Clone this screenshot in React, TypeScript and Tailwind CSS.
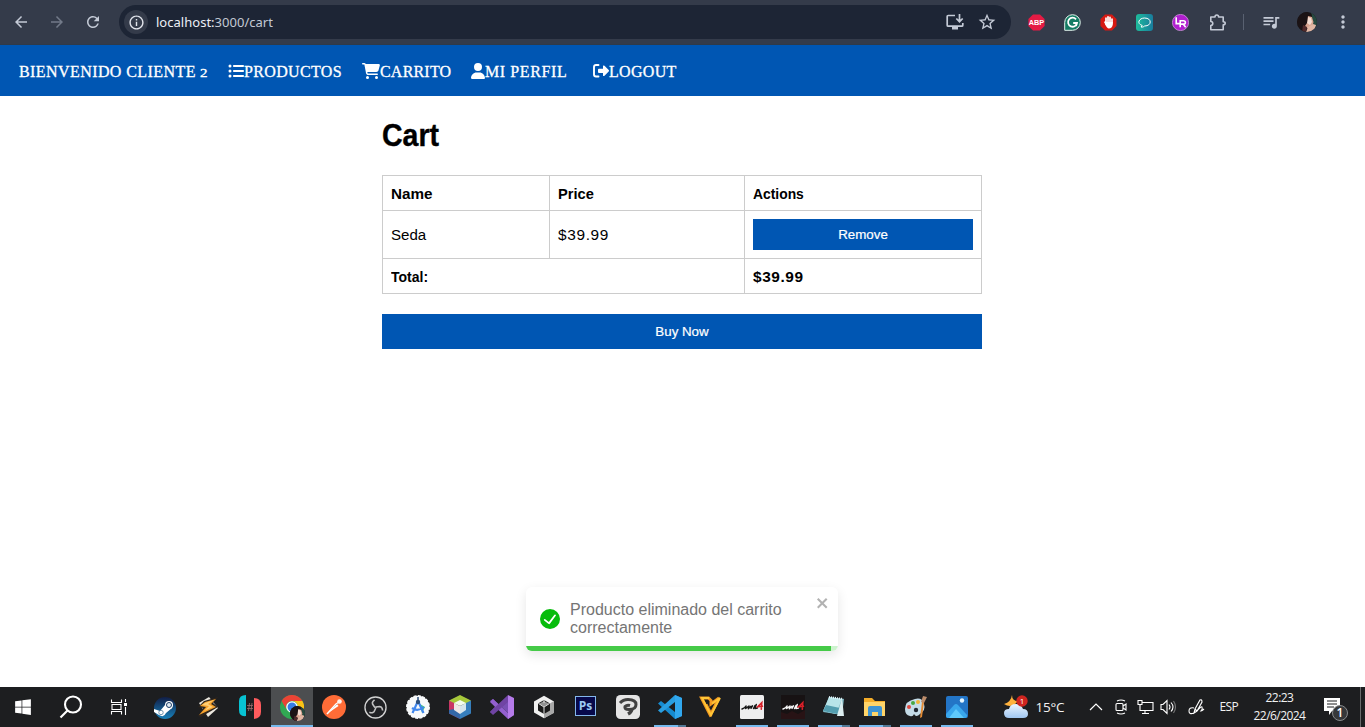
import type { ReactNode } from "react";
import {
  MdArrowBack,
  MdArrowForward,
  MdRefresh,
  MdInfoOutline,
  MdStarBorder,
  MdQueueMusic,
  MdMoreVert,
} from "react-icons/md";
import { FaListUl, FaCartShopping, FaUser, FaWindows } from "react-icons/fa6";

function Portrait({ className }: { className: string }) {
  return (
    <svg viewBox="0 0 20 20" className={className}>
      <clipPath id="face"><circle cx="10" cy="10" r="10" /></clipPath>
      <g clipPath="url(#face)">
        <rect width="20" height="20" fill="#17191c" />
        <path d="M14 0h6v14l-4 1z" fill="#26493f" />
        <path d="M9 3c4-1 6 1 6.500 4l1 3-1 4-4 3-4-3z" fill="#d9a590" />
        <path d="M11 5l3 1 1 4-2 3-3-2z" fill="#f4ddd2" />
        <path d="M0 0h10c4 1 5 2 5 5l-4-1-1 7-2 3-1 6H0z" fill="#1b1315" />
        <path d="M9 20l2-5 5-3 3 1-1 4-4 3z" fill="#e2b7a4" />
        <path d="M5 20l1-7 4 2-1 5z" fill="#50292a" />
      </g>
    </svg>
  );
}

function BrowserBar() {
  return (
    <header className="flex h-[45px] shrink-0 items-center border-b border-[#2f3a49] bg-[#343b4a] text-[#c4cad6]">
      <div className="flex items-center gap-[18px] pl-[12px]">
        <MdArrowBack className="size-[18px]" />
        <MdArrowForward className="size-[18px] text-[#727a89]" />
        <MdRefresh className="size-[18px]" />
      </div>
      <div className="ml-[17px] flex h-[34px] w-[892px] items-center rounded-full bg-[#1d2535] pl-[5px]">
        <div className="flex size-6 items-center justify-center rounded-full bg-[#343b4a]">
          <MdInfoOutline className="size-[17px] text-[#e2e5ec]" />
        </div>
        <span className="ml-2 pt-px font-['Noto_Sans',sans-serif] text-[13px] tracking-[0.02px] text-[#c3c9d4]">
          <span className="text-[#eceff5]">localhost:</span>3000/cart
        </span>
        <div className="ml-auto flex items-center gap-3 pr-[14px]">
          <svg viewBox="0 0 20 18" className="h-[18px] w-5" fill="none" stroke="currentColor" strokeWidth="1.7">
            <path d="M10 2.500H3.200q-1 0-1 1v8.700q0 1 1 1h13.600q1 0 1-1V10M14.500 1v7.300M11.300 5.500l3.200 3.200 3.200-3.200" />
            <path d="M7 14h6v2.500H7z" fill="currentColor" stroke="none" />
          </svg>
          <MdStarBorder className="size-5" />
        </div>
      </div>
      <div className="ml-[17px] flex items-center gap-[19px]">
        <svg viewBox="0 0 17 17" className="size-[17px]">
          <path d="M5 .4h7L16.600 5v7L12 16.600H5L.4 12V5z" fill="#e51b44" />
          <text x="8.500" y="11.300" textAnchor="middle" fontSize="7.300" fontWeight="700" fill="white" fontFamily="Liberation Sans, sans-serif">ABP</text>
        </svg>
        <svg viewBox="0 0 17 17" className="size-[17px]" fill="none">
          <path d="M.7 16.300V8.500a7.800 7.800 0 1 1 7.800 7.800z" fill="#147c64" stroke="#e2f1eb" />
          <path d="M12 5.300A4.500 4.500 0 1 0 13 9H9.200M13 9l-1 3" stroke="white" strokeWidth="1.8" />
        </svg>
        <svg viewBox="0 0 17 17" className="size-[17px]">
          <path d="M5 .5h7L16.500 5v7L12 16.500H5L.5 12V5z" fill="#d71912" />
          <g fill="none" stroke="white" strokeLinecap="round" strokeWidth="1.7"><path d="M6 9V4.200M8 8V2.800M10 8V3.400M12 9V5M5 8.200l2 3" /></g>
          <path d="M5.200 8h7.600v2.600q-.6 4-4 4-1.700 0-3.600-4z" fill="white" />
        </svg>
        <svg viewBox="0 0 17 17" className="size-[17px]">
          <defs><linearGradient id="chat"><stop stopColor="#1ebc9c" /><stop offset="1" stopColor="#197c9d" /></linearGradient></defs>
          <rect width="17" height="17" rx="3" fill="url(#chat)" />
          <path d="M5 13l1.200-1.500C.2 9.500 3 4 8.600 4c7.500 0 7.500 8 0 8-1 1-2 1.200-3.600 1z" fill="none" stroke="white" />
        </svg>
        <svg viewBox="0 0 17 17" className="size-[17px]">
          <circle cx="8.500" cy="8.500" r="8.100" fill="#b01fd0" stroke="#dba3e8" strokeWidth=".7" />
          <path d="M4.200 3.300v6.300h4.200M8.200 13.200V6.700h3.200q2 0 2 1.700t-2 1.700H8.600M11.300 10.200l2.400 3" fill="none" stroke="white" strokeWidth="1.6" />
        </svg>
        <svg viewBox="0 0 19 19" className="size-[19px]" fill="none" stroke="currentColor" strokeWidth="1.6">
          <path d="M2.800 4H7q0-2 1.800-2t1.800 2h4.600v4.700q2 0 2 1.600t-2 1.600v4.800H2.800v-4.200q2-.2 2-2t-2-2z" strokeLinejoin="round" />
        </svg>
      </div>
      <div className="ml-[16px] h-4 w-px bg-[#596171]" />
      <MdQueueMusic className="ml-[17px] size-5" />
      <Portrait className="ml-4 size-5" />
      <MdMoreVert className="ml-4 size-5" />
    </header>
  );
}

function SiteNav() {
  return (
    <nav className="flex h-[51px] shrink-0 items-center bg-[#0056b3] pl-[19px] pt-px font-['Liberation_Serif',serif] text-[16px] text-white [-webkit-text-stroke:0.3px_white]">
      <span className="w-[209px] pt-px tracking-[0.42px]">BIENVENIDO CLIENTE <span className="inline-block origin-bottom-left scale-x-[1.25] text-[12px]">2</span></span>
      <a className="flex w-[134px] items-center tracking-[0.35px]"><FaListUl className="size-4" /><span className="pt-px">PRODUCTOS</span></a>
      <a className="flex w-[109px] items-center tracking-[0.2px]"><FaCartShopping className="mb-px h-4 w-[18px]" /><span className="pt-px">CARRITO</span></a>
      <a className="flex w-[122px] items-center tracking-[0.6px]"><FaUser className="mb-px h-4 w-[14px]" /><span className="pt-px">MI PERFIL</span></a>
      <a className="flex items-center tracking-[0.3px]">
        <svg viewBox="0 0 16 16" className="mb-px size-4">
          <path d="M5.500 2H3Q1 2 1 4v7.500q0 2 2 2h2.500" fill="none" stroke="white" strokeWidth="1.900" strokeLinecap="round" />
          <path d="M10 2.700q.8-.6 1.500 0l4.200 4.400q.6.700 0 1.400l-4.200 4.300q-.7.600-1.500 0V10H6q-1 0-1-1V6.700q0-1 1-1h4z" fill="white" />
        </svg>
        <span className="pt-px">LOGOUT</span>
      </a>
    </nav>
  );
}

function Cart() {
  return (
    <main className="mx-auto w-[600px] text-base text-black">
      <h1 className="origin-left scale-x-[0.89] pt-5 text-[32px] leading-[38px] font-bold [-webkit-text-stroke:0.4px_black]">Cart</h1>
      <table className="mt-[21px] w-[599px] table-fixed border-collapse text-left [&_td]:border [&_td]:border-[#cccccc] [&_td]:px-2 [&_td]:py-0 [&_th]:border [&_th]:border-[#cccccc] [&_th]:px-2 [&_th]:pt-[2px] [&_th]:pb-0">
        <colgroup><col className="w-[167px]" /><col className="w-[195px]" /><col className="w-[237px]" /></colgroup>
        <tbody>
          <tr className="h-[35px]">
            <th><span className="inline-block origin-left scale-x-[0.99] text-[15.4px]">Name</span></th>
            <th><span className="inline-block origin-left scale-x-[0.95] text-[15.4px]">Price</span></th>
            <th><span className="inline-block origin-left scale-x-[0.9] text-[15.4px]">Actions</span></th>
          </tr>
          <tr className="h-12">
            <td><span className="inline-block origin-left scale-x-[0.98] text-[15.4px]">Seda</span></td>
            <td className="text-[15.4px] tracking-[0.65px]">$39.99</td>
            <td><button className="block h-[31px] w-full bg-[#0056b3] text-[13.33px] text-white [-webkit-text-stroke:0.2px_white]">Remove</button></td>
          </tr>
          <tr className="h-[35px] font-bold">
            <td colSpan={2}><span className="mt-[2px] inline-block origin-left scale-x-[0.91] text-[15.4px]">Total:</span></td>
            <td className="tracking-[0.6px]"><span className="mt-[2px] inline-block text-[15.4px]">$39.99</span></td>
          </tr>
        </tbody>
      </table>
      <button className="mt-5 h-[35px] w-full bg-[#0056b3] text-[13.33px] text-white [-webkit-text-stroke:0.2px_white]">Buy Now</button>
    </main>
  );
}

function Toast() {
  return (
    <div className="absolute top-[587px] left-[526px] flex h-16 w-[312px] flex-col overflow-hidden rounded-[6px] bg-white shadow-[0_4px_12px_rgba(0,0,0,0.1)]">
      <div className="flex flex-1 items-center pt-[5px] pl-[14px] text-[#757575]">
        <svg viewBox="0 0 24 24" className="size-5" fill="#07bc0c"><path d="M12 0a12 12 0 1 0 12 12A12 12 0 0 0 12 0zm6.900 8.200-6.800 9.200a1.500 1.500 0 0 1-2.200.3l-4.900-3.900a1 1 0 0 1 1.300-1.600l4.300 3.500L17.300 7a1 1 0 1 1 1.600 1.200z" /></svg>
        <p className="ml-[10px] w-[230px] text-base leading-[18px]">Producto eliminado del carrito correctamente</p>
        <svg viewBox="0 0 14 16" className="mb-[32px] ml-4 h-4 w-[14px]" fill="#b2b2b2"><path fillRule="evenodd" d="M7.710 8.230l3.750 3.750-1.480 1.480-3.750-3.750-3.750 3.750L1 11.980l3.750-3.750L1 4.480 2.480 3l3.750 3.750L9.980 3l1.480 1.480z" /></svg>
      </div>
      <div className="h-[5px] bg-[#cdf3ce]"><div className="h-full w-[305px] bg-[#45ca48]" /></div>
    </div>
  );
}

type App = { icon: ReactNode; wide: boolean; state?: "active" | "open" | "multi" };

function Mir({ dark }: { dark?: boolean }) {
  return (
    <svg viewBox="0 0 24 24" className="size-6">
      <rect width="24" height="24" rx={dark ? 0 : 1.5} fill={dark ? "#171213" : "#eeeeef"} />
      {dark && <path d="M0 24v-7l6 2 5-3 6 3 7-4v9z" fill="#281315" />}
      <g fill="none" strokeLinecap="round">
        <path d="M2 14q3-1 4-3l-.3 2.500L9 11l-.7 2.700L11 11.300M11 13.300l1.500-2.500M13.500 13.500l1.500-3M16.300 9.500L15 13.500l2.500-.5" stroke={dark ? "#f4f4f4" : "#171717"} strokeWidth="1.400" strokeLinejoin="round" />
        <path d="M21.300 14.300l.5-6.600-4 4 4.700-.4" stroke="#d82029" strokeWidth="1.600" />
      </g>
    </svg>
  );
}

const apps: App[] = [
  { wide: true, icon: <svg viewBox="0 0 22 22" className="mr-px mt-px size-[22px]"><defs><linearGradient id="steam" x2="0" y2="1"><stop stopColor="#111e47" /><stop offset="1" stopColor="#1880b9" /></linearGradient></defs><circle cx="11" cy="11" r="11" fill="url(#steam)" /><path d="M0 12l6 2 5-6 7 3-6 5q-2 5-7 2L0 15z" fill="white" /><circle cx="15" cy="8" r="4" fill="white" /><circle cx="15" cy="8" r="2.500" fill="#e4edf4" stroke="#1d3f69" /><circle cx="7" cy="15.500" r="2.200" fill="none" stroke="#57809e" strokeWidth=".8" /></svg> },
  { wide: true, icon: <svg viewBox="0 0 24 24" className="size-6"><path d="M3 8L13 2l9 11-10 9z" fill="#ece8df" /><path d="M22 2L8 6 2 12l5 1-5 8 3 1 17-10-5-4z" fill="#2d241c" /><path d="M20 4L9 7l-5 4 6 1-7 8L20 12l-5-3z" fill="#f5a12c" /><path d="M18 5L9 8l-3 2 7 1-5 5 9-4-5-3z" fill="#ffcf76" /></svg> },
  { wide: true, icon: <svg viewBox="0 0 24 24" className="size-6"><path d="M8 0v21Q1 22 1 15V6q0-6 7-6z" fill="#08c3d3" /><path d="M16 3q7 0 7 7v7q0 6-7 7z" fill="#ff5b5d" /><g stroke="#9b6e70" strokeWidth=".8"><path d="M9 10.500h6M9 13.500h6M11.500 8l-1 8M14 8l-1 8" /></g></svg> },
  { wide: true, state: "active", icon: <div className="flex size-6 items-center"><svg viewBox="0 0 24 24" className="size-6 shrink-0"><circle cx="12" cy="12" r="12" fill="#31a853" /><path d="M1.600 6A12 12 0 0 1 22.400 6H12a6 6 0 0 0-5.200 9z" fill="#ea4335" /><path d="M22.400 6A12 12 0 0 1 12 24l5.200-9A6 6 0 0 0 12 6z" fill="#fbc116" /><circle cx="12" cy="12" r="5.800" fill="white" /><circle cx="12" cy="12" r="4.500" fill="#367ce5" /></svg><Portrait className="-ml-[14px] mt-[13px] size-[15px] shrink-0" /></div> },
  { wide: true, icon: <svg viewBox="0 0 24 24" className="size-6"><circle cx="12" cy="12" r="12" fill="#ff6c37" /><path d="M5 19l6-7 4-3 1.500 2L12 14z" fill="white" /><path d="M5 19l9-10 3-2" stroke="white" strokeWidth="1.5" /><circle cx="17.500" cy="6.500" r="2.300" fill="#fff4ef" /></svg> },
  { wide: true, icon: <svg viewBox="0 0 24 24" className="size-[23px]" fill="none"><circle cx="12" cy="12" r="11" fill="#202124" stroke="#d2d2d2" strokeWidth="1.400" /><g stroke="#c1c1c1" strokeWidth="1.700"><path d="M11 4q-4 3-1 6 1 2 2 2" /><path d="M11 4q-4 3-1 6 1 2 2 2" transform="rotate(120 12 12)" /><path d="M11 4q-4 3-1 6 1 2 2 2" transform="rotate(240 12 12)" /></g></svg> },
  { wide: true, icon: <svg viewBox="0 0 24 24" className="size-6"><circle cx="12" cy="12" r="11.300" fill="#f8fafb" /><circle cx="12" cy="12" r="11.300" fill="none" stroke="#f8fafb" strokeWidth="1.300" strokeDasharray="3 1.400" /><path d="M14 9l5 3-3 6z" fill="#43c980" /><path d="M12 6L6.500 18M12 6l5.500 12M6 13q5.500 4 12-1" fill="none" stroke="#4087ed" strokeWidth="2.200" /><circle cx="12" cy="7" r="2.200" fill="#2b4e7b" /><path d="M12 2v4" stroke="#2b4e7b" strokeWidth="1.500" /></svg> },
  { wide: true, icon: <svg viewBox="0 0 24 24" className="size-6"><path d="M12 0l11 5.500-4 5.500-7-3-7 3-4-5.500z" fill="#a6c83b" /><path d="M1 5.500v13L12 24v-6L6 14V8z" fill="#c93565" /><path d="M1 15v3.500L12 24v-6l-6-4z" fill="#3467a8" /><path d="M23 5.500v13L12 24v-6l6-4V8z" fill="#367ebc" /><path d="M12 5l6 3-6 3-6-3z" fill="#f3fbed" /><path d="M6 8l6 3v8l-6-4z" fill="#eee6e5" /><path d="M18 8l-6 3v8l6-4z" fill="#d6e5ec" /></svg> },
  { wide: true, icon: <svg viewBox="0 0 24 24" className="size-6"><path d="M0 6l3-2 15 14V6L3 19l-3-2 5-5.300z" fill="#7950b4" /><path d="M3 4l15 14 6 2-6 4L0 7z" fill="#9360cf" /><path d="M18 0l6 3v17l-6 4z" fill="#b57bea" /><path d="M18 0v7L3 20l-3-3z" fill="#7044a4" /></svg> },
  { wide: true, icon: <svg viewBox="0 0 24 24" className="size-6"><path d="M12 .8l10 5.600v11.200l-10 5.600-10-5.600V6.400z" fill="#f0f0f0" /><path d="M22 6v12l-10 5.200V12z" fill="#a8a8a8" /><path d="M12 5l6 3.400v7.200L12 19l-6-3.400V8.400z" fill="#1b1b1b" /><path d="M12 6l5 2.700-5 2.800-5-2.800z" fill="#929292" /><path d="M12 12v7M6.500 8.500L12 12l5.500-3.500M12 5v3" fill="none" stroke="#e3e3e3" /></svg> },
  { wide: true, icon: <div className="mb-[2px] flex h-5 w-[21px] items-center justify-center border border-[#83b7eb] bg-[#07094b] font-['Open_Sans',sans-serif] text-[12px] leading-none font-bold text-[#9bc9f5]">Ps</div> },
  { wide: true, icon: <svg viewBox="0 0 24 24" className="size-6"><rect width="24" height="24" rx="4.500" fill="#e5e5e5" /><path d="M4 8q3-3.500 8-3.500 8 0 8 5 0 5-7 5-5 0-4-3 2-2 5-1" fill="none" stroke="#414141" strokeWidth="3" /><path d="M16 13q0 4-4 6" fill="none" stroke="#414141" strokeWidth="3.500" /></svg> },
  { wide: true, state: "multi", icon: <svg viewBox="0 0 24 24" className="size-6"><path d="M17 0l7 3v18l-7 3L0 8.500 3 6l14 11z" fill="#168bd0" /><path d="M17 0v7L3 18l-3-2.500z" fill="#299fe2" /><path d="M17 0l7 3v18l-7 3z" fill="#31a8ef" /></svg> },
  { wide: false, icon: <svg viewBox="0 0 24 24" className="size-6" fill="none" strokeLinejoin="miter"><path d="M7 9.500L12 19l8-16-8 6V5.500L9.500 3H2.500L12 21.500" stroke="#f39a21" strokeWidth="3" /><path d="M10 3H3l9 17 9-17-8 5.500" stroke="#ffc637" strokeWidth="1.800" /></svg> },
  { wide: false, state: "open", icon: <Mir /> },
  { wide: false, state: "open", icon: <Mir dark /> },
  { wide: false, state: "multi", icon: <svg viewBox="0 0 24 24" className="size-6"><path d="M7 2l15 2-2 16-19-3z" fill="#78b3bf" /><path d="M7 2l13 2-6 15-13-3z" fill="#b8e4e9" /><path d="M4 10l14 3-3 6-14-3z" fill="#539daf" /><path d="M20 3l2 18h-7z" fill="#dceef0" /><path d="M7 2l14 2" stroke="#e9faff" strokeDasharray="1 1" strokeWidth="2" /></svg> },
  { wide: false, state: "multi", icon: <svg viewBox="0 0 24 24" className="size-6"><path d="M1 3h8l3 3h10v4H1z" fill="#f4ad29" /><path d="M1 7h21v14H1z" fill="#ffd468" /><path d="M5 21v-8q0-2 2-2h10q2 0 2 2v8h-4v-4H9v4z" fill="#3e94d3" /></svg> },
  { wide: false, state: "open", icon: <svg viewBox="0 0 24 24" className="size-6"><path d="M11 4Q1 6 1 14q0 6 5 7 3 1 4-2 2 4 6 0 6-4 4-10Q18 2 11 4z" fill="#c5dce8" /><circle cx="5" cy="12" r="2" fill="#de4a40" /><circle cx="9" cy="8" r="2" fill="#49a742" /><circle cx="14" cy="7" r="2" fill="#f3b435" /><circle cx="12" cy="15" r="2.200" fill="#222833" /><path d="M16 23l2-16h2l-2 15z" fill="#e48b33" /><path d="M17 7l2-6 4 1-3 6z" fill="#bd8d6b" /></svg> },
  { wide: false, state: "open", icon: <svg viewBox="0 0 24 24" className="size-6"><rect x="1" y="1" width="22" height="22" rx="2" fill="#2375c6" /><path d="M1 19L9 10q2-2 4 0l9 10v1q0 2-2 2H3q-2 0-2-2z" fill="#39a7ec" /><path d="M4 23l7-9 8 9z" fill="#5fc9fa" /><circle cx="17" cy="5.500" r="2.200" fill="#e6f6ff" /></svg> },
];

function TaskbarApp({ app }: { app: App }) {
  return (
    <div className={`${app.wide ? "w-[42px]" : "w-[41px]"} ${app.state === "active" ? "bg-[#4c4e50]" : ""} flex shrink-0 flex-col items-center`}>
      <div className="flex h-[38px] items-center pt-[2px]">{app.icon}</div>
      {app.state && (
        <div className={`${app.state === "active" ? "w-full" : "w-8"} flex h-[2px] justify-end bg-[#76b9ed]`}>
          {app.state === "multi" && <div className="h-full w-2 bg-[#527895]" />}
        </div>
      )}
    </div>
  );
}

function Taskbar() {
  return (
    <footer className="flex h-10 shrink-0 bg-[#1d1e20] font-['Open_Sans',sans-serif] text-[12px] text-[#f2f2f2]">
      <div className="flex w-[144.5px] shrink-0 items-center">
        <div className="flex w-[46px] justify-center"><FaWindows className="size-[18px] text-white" /></div>
        <div className="flex w-[49px] justify-center"><svg viewBox="0 0 24 24" className="size-6" fill="none" stroke="white" strokeWidth="2.100"><circle cx="14" cy="9.500" r="8" /><path d="M8.500 15.500L1.500 22.500" /></svg></div>
        <div className="flex w-12 justify-center"><svg viewBox="0 0 18 16" className="h-4 w-[18px]" fill="none" stroke="white" strokeWidth="1.100"><path d="M1.500.5v3h10v-3M2 5.500h9v5H2zM1.500 15.500v-3h10v3M15.500 0v3M15.500 8v8" /><path d="M14 4h3v3h-3z" fill="white" stroke="none" /></svg></div>
      </div>
      {apps.map((app, index) => <TaskbarApp key={index} app={app} />)}
      <div className="ml-[25px] flex flex-1 items-center">
        <svg viewBox="0 0 26 26" className="size-[26px] shrink-0">
          <defs><linearGradient id="cloud" x2="0" y2="1"><stop stopColor="#edf6ff" /><stop offset="1" stopColor="#9fc6f1" /></linearGradient></defs>
          <path d="M9 1q-1 7-8 9 8 5 14-3Q9 7 9 1z" fill="#ffb23d" />
          <path d="M6 24q-5 0-5-5 0-4 5-4 1-5 7-5 5 0 7 5 5 0 5 5 0 4-5 4z" fill="url(#cloud)" />
          <circle cx="19" cy="7" r="5.700" fill="#cf251f" /><text x="19" y="10" textAnchor="middle" fontSize="8" fill="white">1</text>
        </svg>
        <span className="ml-[7px] w-[53px] text-[13.5px] tracking-[-0.2px]">15°C</span>
        <svg viewBox="0 0 14 8" className="h-2 w-[14px] shrink-0" fill="none" stroke="white" strokeWidth="1.200"><path d="M1 7l6-6 6 6" /></svg>
        <svg viewBox="0 0 14 16" className="ml-[11px] h-4 w-[14px] shrink-0" fill="none" stroke="white" strokeWidth="1.100"><rect x="2" y="4.500" width="7" height="7" rx="1" /><path d="M9 7l3-2v6L9 9M3 2q4-2 8 0M3 14q4 2 8 0" /></svg>
        <svg viewBox="0 0 17 16" className="ml-[9px] h-4 w-[17px] shrink-0" fill="none" stroke="white" strokeWidth="1.100"><path d="M5 3.500h11v8H5M8 11.500v3M5 14.500h7M1 1.500h4v4H1zM3 5.500v6h2" /></svg>
        <svg viewBox="0 0 17 16" className="ml-[6px] h-4 w-[17px] shrink-0" fill="none" stroke="white" strokeWidth="1.100"><path d="M1 5.500h2l4-4v13l-4-4H1zM9 5.500q2 2.500 0 5M11 3.500q4 4.500 0 9" /><path d="M13.500 2q4 6 0 12" stroke="#777" /></svg>
        <svg viewBox="0 0 18 18" className="ml-[11px] size-[18px] shrink-0" fill="none" stroke="white" strokeWidth="1.100"><path d="M6 15l1-4 5-9q2-1 2 2L9 13zM7 11l2 2M6 10q-5-1-5 3 0 4 5 2M9 13q4-5 5-4 1 2-1 4 1 0 3-2" /></svg>
        <span className="ml-[14px] w-[29px] text-[12px] tracking-[-0.6px]">ESP</span>
        <div className="w-[62px] text-center text-[12px] leading-[18px] tracking-[-0.55px]">22:23<br />22/6/2024</div>
        <svg viewBox="0 0 26 26" className="mt-1 ml-[12px] size-[26px] shrink-0"><path d="M1 2h16v13H9l-3 4v-4H1z" fill="white" /><path d="M4 5h10M4 8h10M4 11h7" stroke="#1d1e20" /><circle cx="17" cy="17" r="7.500" fill="#36383a" stroke="#898b8d" /><text x="17" y="21" textAnchor="middle" fontSize="12" fontWeight="600" fill="white">1</text></svg>
        <div className="mr-1 ml-auto h-full w-px bg-[#686a6b]" />
      </div>
    </footer>
  );
}

export default function App() {
  return (
    <div className="relative flex h-[727px] w-[1365px] flex-col overflow-hidden bg-white font-['Liberation_Sans',sans-serif]">
      <BrowserBar />
      <SiteNav />
      <div className="min-h-0 flex-1 pr-px"><Cart /></div>
      <Taskbar />
      <Toast />
    </div>
  );
}
